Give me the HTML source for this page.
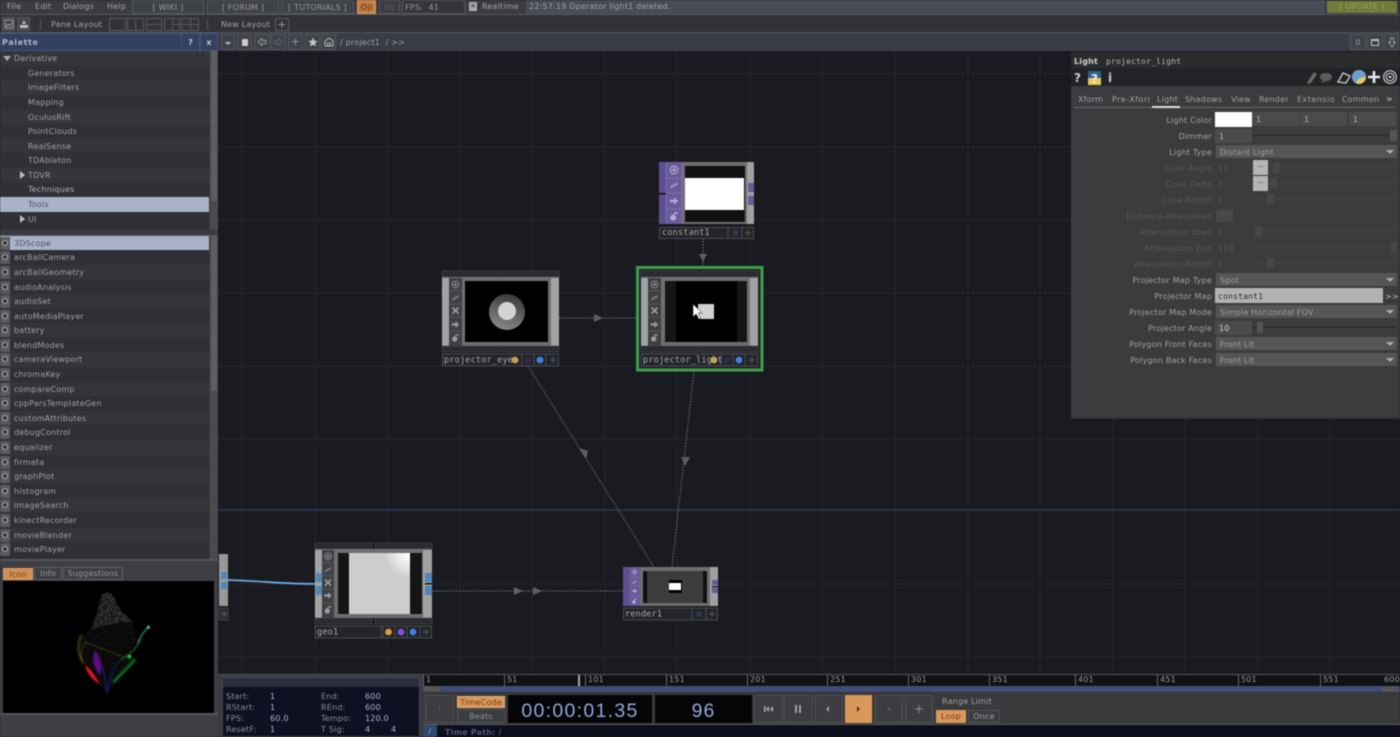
<!DOCTYPE html>
<html><head><meta charset="utf-8"><title>TouchDesigner</title>
<style>
html,body{margin:0;padding:0;background:#191b20;width:1400px;height:737px;overflow:hidden}
#r{position:absolute;left:0;top:0;width:1400px;height:737px;overflow:hidden;filter:blur(.5px);font-family:"DejaVu Sans","Liberation Sans",sans-serif;font-size:8px;letter-spacing:.2px;color:#a2a2a2}
#r div{position:absolute;box-sizing:border-box}
.t{white-space:nowrap;line-height:12px;height:12px}
.b{border:1px solid #55585e;text-align:center;line-height:13px;color:#9a9a9a}
.m{font-family:"DejaVu Sans Mono","Liberation Mono",monospace}
.l{left:1071px;width:141px;text-align:right;white-space:nowrap;line-height:12px;height:12px;color:#a2a2a2;margin-top:1px}
.d{color:#575859}
.t.d{margin-top:1px}
.f{background:#4b4b4c;height:14px;line-height:14px;padding:1px 0 0 4px;color:#b0b0b0}
.s{background:#565657;left:1216px;width:181px;height:13px;line-height:13px;padding:1px 0 0 4px;color:#9f9f9f}
.s:after{content:"";position:absolute;right:3px;top:5px;border:4px solid transparent;border-top:4px solid #aaa;border-bottom:0}
.ln{height:1px;background:#252526}
.ld{height:1px;background:#444546}
.h{width:7px;height:11px;background:#555}
.hd{width:7px;height:11px;background:#464748}
.tr{left:0;width:209px;height:15px;line-height:15px;white-space:nowrap;color:#9ea1a5;padding-left:28px}
.li{left:0;width:209px;height:15px;line-height:15px;white-space:nowrap;color:#9ea1a5;padding-left:14px}
.li:before{content:"";position:absolute;left:0;top:1px;width:10px;height:13px;background:#5a5b5e}
.li:after{content:"";position:absolute;left:2px;top:4px;width:6px;height:6px;box-sizing:border-box;border:1.4px solid #b0b0b0;border-radius:50%;background:#333}
.tt{color:#8f95a0;text-align:center;line-height:11px}
.rl{top:674px;height:12px;line-height:12px;color:#9a9a9a;border-left:1px solid #666;padding-left:2px;white-space:nowrap}
.i{color:#8c8f98;line-height:12px;height:12px;white-space:nowrap;margin-top:1px}
.v{color:#a9b4d8;line-height:12px;height:12px;white-space:nowrap;margin-top:1px}
.c{background:#3c3d41;border:1px solid #4e5055;text-align:center;color:#8f8f8f}
</style></head><body><div id="r">

<!-- top bar -->
<div style="left:0;top:0;width:1400px;height:15px;background:#3a3c41;border-bottom:1px solid #55575c"></div>
<div class="t" style="left:7px;top:1px">File</div>
<div class="t" style="left:35px;top:1px">Edit</div>
<div class="t" style="left:63px;top:1px">Dialogs</div>
<div class="t" style="left:107px;top:1px">Help</div>
<div class="b" style="left:132px;top:0;width:72px;height:14px;background:#3f4247">[ WIKI ]</div>
<div class="b" style="left:207px;top:0;width:72px;height:14px;background:#3f4247">[ FORUM ]</div>
<div class="b" style="left:281px;top:0;width:73px;height:14px;background:#3f4247">[ TUTORIALS ]</div>
<div class="b" style="left:357px;top:0;width:19px;height:14px;background:#c47c42;color:#3a2412;border-color:#d59a68">O|I</div>
<div class="b" style="left:379px;top:0;width:21px;height:14px;color:#5d5f63">60</div>
<div class="b" style="left:402px;top:0;width:63px;height:14px;background:#33353a;text-align:left;padding-left:2px">FPS: &nbsp;41</div>
<div style="left:469px;top:2px;width:8px;height:9px;background:#aaa;color:#222;font-size:7px;line-height:9px;text-align:center;letter-spacing:0">×</div>
<div class="t" style="left:482px;top:1px">Realtime</div>
<div style="left:526px;top:0;width:799px;height:14px;background:#484c56"></div>
<div class="t" style="left:529px;top:1px;color:#a0a3aa">22:57:19 Operator light1 deleted.</div>
<div style="left:1327px;top:1px;width:70px;height:12px;background:#6f7c3c;color:#94a05a;text-align:center;line-height:12px">[ UPDATE ]</div>

<!-- row 2 -->
<div style="left:0;top:15px;width:1400px;height:18px;background:#323337;border-bottom:1px solid #56585c"></div>
<div class="b" style="left:2px;top:17px;width:13px;height:14px;background:#44464b"><svg style="position:absolute;left:1px;top:1px" width="10" height="10"><rect x="1" y="1" width="8" height="8" fill="none" stroke="#999"/><path d="M2 8 L4 5 6 7 8 4" fill="none" stroke="#999"/></svg></div>
<div class="b" style="left:17px;top:17px;width:13px;height:14px;background:#44464b"><svg style="position:absolute;left:1px;top:1px" width="10" height="10"><path d="M3 5 L5 1 7 5Z M1 6 H9 V9 H1Z" fill="#bbb"/></svg></div>
<div style="left:40px;top:19px;width:1px;height:11px;background:#5a5a5a"></div>
<div class="t" style="left:51px;top:19px">Pane Layout</div>
<div class="b" style="left:109px;top:18px;width:17px;height:13px"></div>
<div class="b" style="left:127px;top:18px;width:17px;height:13px"><div style="left:7px;top:0;width:1px;height:11px;background:#55585e"></div></div>
<div class="b" style="left:146px;top:18px;width:16px;height:13px"><div style="left:0;top:5px;width:14px;height:1px;background:#55585e"></div></div>
<div class="b" style="left:164px;top:18px;width:16px;height:13px"><div style="left:7px;top:0;width:1px;height:11px;background:#55585e"></div><div style="left:7px;top:5px;width:8px;height:1px;background:#55585e"></div></div>
<div class="b" style="left:181px;top:18px;width:18px;height:13px"><div style="left:8px;top:0;width:1px;height:11px;background:#55585e"></div><div style="left:0;top:5px;width:16px;height:1px;background:#55585e"></div></div>
<div style="left:207px;top:19px;width:1px;height:11px;background:#5a5a5a"></div>
<div class="t" style="left:221px;top:19px">New Layout</div>
<div class="b" style="left:275px;top:18px;width:14px;height:13px;font-size:11px;line-height:11px">+</div>

<!-- row 3 -->
<div style="left:218px;top:33px;width:1182px;height:18px;background:#3a3d43"></div>
<div style="left:0;top:33px;width:218px;height:18px;background:#33405f;border:1px solid #47557c"></div>
<div class="t" style="left:2px;top:37px;font-weight:bold;color:#b0b6c4;letter-spacing:.6px">Palette</div>
<div class="b" style="left:181px;top:33px;width:19px;height:18px;line-height:18px;font-weight:bold;border-color:#47557c;color:#c0c4d0">?</div>
<div class="b" style="left:200px;top:33px;width:18px;height:18px;line-height:18px;font-weight:bold;border-color:#47557c;color:#c0c4d0">x</div>
<div class="b" style="left:221px;top:34px;width:14px;height:16px;background:#3f4247"><div style="left:3px;top:7px;border:3px solid transparent;border-top:3px solid #bbb;border-bottom:0"></div></div>
<div class="b" style="left:237px;top:34px;width:15px;height:16px;background:#3f4247"><div style="left:4px;top:4px;width:6px;height:7px;background:#ccc"></div></div>
<div class="b" style="left:254px;top:34px;width:16px;height:16px;background:#3f4247"><svg style="position:absolute;left:2px;top:2px" width="10" height="10"><path d="M1 5 L5 1.500 V3.500 H9 V6.500 H5 V8.500Z" fill="none" stroke="#999" stroke-width=".9"/></svg></div>
<div class="b" style="left:271px;top:34px;width:15px;height:16px;background:#3f4247"><svg style="position:absolute;left:2px;top:2px" width="10" height="10"><path d="M9 5 L5 1.500 V3.500 H1 V6.500 H5 V8.500Z" fill="none" stroke="#606266" stroke-width=".9"/></svg></div>
<div class="b" style="left:288px;top:34px;width:15px;height:16px;background:#3f4247;font-size:11px;line-height:14px">+</div>
<div class="b" style="left:305px;top:34px;width:15px;height:16px;background:#3f4247"><svg style="position:absolute;left:2px;top:2px" width="10" height="10"><path d="M5 0.500 L6.300 3.700 9.700 4 7.100 6.200 8 9.500 5 7.700 2 9.500 2.900 6.200 .3 4 3.700 3.700Z" fill="#c4c4c4"/></svg></div>
<div class="b" style="left:321px;top:34px;width:15px;height:16px;background:#3f4247"><svg style="position:absolute;left:2px;top:2px" width="10" height="10"><path d="M5 1 L9 4 V9 H1 V4Z M3.500 6 H6.500 V8.500 H3.500Z" fill="none" stroke="#aaa" stroke-width="1.1"/></svg></div>
<div class="t" style="left:340px;top:37px;color:#9fa1a6">/ project1 &nbsp;/ &gt;&gt;</div>
<div class="b" style="left:1350px;top:34px;width:16px;height:16px;background:#3f4247;line-height:15px">0</div>
<div class="b" style="left:1367px;top:34px;width:16px;height:16px;background:#3f4247"><div style="left:3px;top:4px;width:8px;height:7px;border:1px solid #bbb;border-top-width:2px"></div></div>
<div class="b" style="left:1384px;top:34px;width:15px;height:16px;background:#3f4247"><svg style="position:absolute;left:2px;top:2px" width="10" height="11"><path d="M3.500 1 H6.500 V5.500 H8.500 L5 10 1.500 5.500 H3.500Z" fill="none" stroke="#999"/></svg></div>

<!-- palette tree -->
<div style="left:0;top:51px;width:218px;height:185px;background:#2f3136"></div>
<div class="tr" style="top:51px;padding-left:14px;background:#34363b">Derivative</div>
<div style="left:3px;top:56px;border:4px solid transparent;border-top:5px solid #aaa;border-bottom:0"></div>
<div class="tr" style="top:66px;background:#2f3136">Generators</div>
<div class="tr" style="top:80px;background:#34363b">ImageFilters</div>
<div class="tr" style="top:95px;background:#2f3136">Mapping</div>
<div class="tr" style="top:110px;background:#34363b">OculusRift</div>
<div class="tr" style="top:124px;background:#2f3136">PointClouds</div>
<div class="tr" style="top:139px;background:#34363b">RealSense</div>
<div class="tr" style="top:153px;background:#2f3136">TDAbleton</div>
<div class="tr" style="top:168px;background:#34363b">TDVR</div>
<div style="left:20px;top:171px;border:4px solid transparent;border-left:5px solid #c0c0c0;border-right:0"></div>
<div class="tr" style="top:182px;background:#2f3136;color:#aeb1b5">Techniques</div>
<div class="tr" style="top:197px;height:15px;background:#a9b2c8;color:#4c5160">Tools</div>
<div class="tr" style="top:212px;background:#2f3136">UI</div>
<div style="left:20px;top:215px;border:4px solid transparent;border-left:5px solid #c0c0c0;border-right:0"></div>
<div style="left:209px;top:51px;width:9px;height:183px;background:#4a4b4e;border-left:1px solid #37383b"></div>
<div style="left:211px;top:51px;width:6px;height:150px;background:#5d5e61"></div>
<div style="left:0;top:230px;width:218px;height:6px;background:#3a3b3e;border-bottom:1px solid #58595c"></div>

<!-- palette list -->
<div style="left:0;top:236px;width:218px;height:324px;background:#2d2f34"></div>
<div class="li" style="top:236px;background:#a9b2c8;color:#4c5160">3DScope</div>
<div class="li" style="top:250px;background:#2e3035">arcBallCamera</div>
<div class="li" style="top:265px;background:#33353a">arcBallGeometry</div>
<div class="li" style="top:280px;background:#2e3035">audioAnalysis</div>
<div class="li" style="top:294px;background:#33353a">audioSet</div>
<div class="li" style="top:309px;background:#2e3035">autoMediaPlayer</div>
<div class="li" style="top:323px;background:#33353a">battery</div>
<div class="li" style="top:338px;background:#2e3035">blendModes</div>
<div class="li" style="top:352px;background:#33353a">cameraViewport</div>
<div class="li" style="top:367px;background:#2e3035">chromaKey</div>
<div class="li" style="top:382px;background:#33353a">compareComp</div>
<div class="li" style="top:396px;background:#2e3035">cppParsTemplateGen</div>
<div class="li" style="top:411px;background:#33353a">customAttributes</div>
<div class="li" style="top:425px;background:#2e3035">debugControl</div>
<div class="li" style="top:440px;background:#33353a">equalizer</div>
<div class="li" style="top:455px;background:#2e3035">firmata</div>
<div class="li" style="top:469px;background:#33353a">graphPlot</div>
<div class="li" style="top:484px;background:#2e3035">histogram</div>
<div class="li" style="top:498px;background:#33353a">imageSearch</div>
<div class="li" style="top:513px;background:#2e3035">kinectRecorder</div>
<div class="li" style="top:528px;background:#33353a">movieBlender</div>
<div class="li" style="top:542px;background:#2e3035">moviePlayer</div>
<div style="left:209px;top:236px;width:9px;height:324px;background:#4a4b4e;border-left:1px solid #37383b"></div>
<div style="left:211px;top:236px;width:6px;height:155px;background:#5d5e61"></div>

<!-- icon panel -->
<div style="left:0;top:559px;width:218px;height:178px;background:#3e3f42;border-top:2px solid #55565a"></div>
<div class="tt" style="left:3px;top:568px;width:30px;height:12px;background:#d08f55;color:#8a3c1a;border:1px solid #d9a070">Icon</div>
<div class="tt" style="left:34px;top:567px;width:28px;height:13px;border:1px solid #5e6066">Info</div>
<div class="tt" style="left:63px;top:567px;width:60px;height:13px;border:1px solid #5e6066">Suggestions</div>
<div style="left:3px;top:581px;width:211px;height:132px;background:#000"></div>
<div style="left:0;top:713px;width:218px;height:2px;background:#55565a"></div>
<svg style="position:absolute;left:0;top:0" width="218" height="737">
<defs>
<filter id="bl" x="-30%" y="-30%" width="160%" height="160%"><feGaussianBlur stdDeviation="3.500"/></filter>
<filter id="b2" x="-30%" y="-30%" width="160%" height="160%"><feGaussianBlur stdDeviation="1.500"/></filter>
<filter id="sp" x="-10%" y="-10%" width="120%" height="120%"><feTurbulence type="fractalNoise" baseFrequency=".28" numOctaves="2" seed="4"/><feColorMatrix values="0 0 0 0 .5 0 0 0 0 .5 0 0 0 0 .5 0 0 0 4 -1.700"/><feComposite in2="SourceGraphic" operator="in"/><feGaussianBlur stdDeviation="1.200"/></filter>
</defs>
<g transform="translate(50 585) scale(.3333)">
<path d="M150 42 C158 15 190 15 198 50 C208 80 235 95 248 112 C200 108 150 125 120 135 C135 105 145 80 150 42Z" fill="#fff" filter="url(#sp)" opacity=".55"/>
<path d="M120 135 C92 150 78 195 95 228 C115 262 150 300 172 325 C200 280 240 240 265 180 C260 150 250 125 245 112 C200 108 150 125 120 135Z" fill="#fff" filter="url(#sp)" opacity=".16"/>
<path d="M95 150 C82 175 80 200 100 235" fill="none" stroke="#5a5a20" stroke-width="6" filter="url(#bl)" opacity=".8"/>
<path d="M108 172 L226 218 M108 172 C96 190 88 205 96 225" fill="none" stroke="#a89a2c" stroke-width="2" stroke-dasharray="3 2" filter="url(#b2)" opacity=".9"/>
<path d="M104 240 C125 252 138 278 150 298 C125 285 110 262 104 240Z" fill="#d81222" filter="url(#b2)"/>
<path d="M135 195 C148 215 165 240 150 272 C135 250 122 230 135 195Z" fill="#5c0c86" filter="url(#bl)"/>
<path d="M208 228 C190 250 176 280 172 325 M160 245 C163 280 168 300 172 325" fill="none" stroke="#1c2aa0" stroke-width="3" filter="url(#b2)" opacity=".8"/>
<path d="M255 222 C235 248 212 268 190 292" fill="none" stroke="#148a26" stroke-width="7" filter="url(#bl)"/>
<path d="M275 158 C262 190 240 208 210 226" fill="none" stroke="#1c9c32" stroke-width="2.500" filter="url(#b2)" opacity=".8"/>
<circle cx="238" cy="215" r="6" fill="#22c03a" filter="url(#b2)"/>
<path d="M298 124 C288 132 276 146 262 176" fill="none" stroke="#248a7c" stroke-width="4" filter="url(#b2)"/>
<circle cx="295" cy="127" r="5" fill="#36b8a4" filter="url(#b2)"/>
</g></svg>

<!-- network grid -->
<svg style="position:absolute;left:218px;top:51px" width="1182" height="623" viewBox="218 51 1182 623">
<defs>
<symbol id="ta" viewBox="0 0 12 12"><circle cx="6" cy="6" r="4.500" fill="none" stroke="currentColor" stroke-width="1.400"/><circle cx="6" cy="6" r="2" fill="currentColor"/></symbol>
<symbol id="pe" viewBox="0 0 12 12"><path d="M1 11 L3 6 6 7 5 4 8 5 11 1 9 7 6 6 7 9 4 8Z" fill="currentColor"/></symbol>
<symbol id="xx" viewBox="0 0 12 12"><path d="M2 2 L10 10 M10 2 L2 10" stroke="currentColor" stroke-width="2.400" fill="none"/></symbol>
<symbol id="ar" viewBox="0 0 12 12"><path d="M1 4.500 H6 V1.500 L11 6 6 10.500 V7.500 H1Z" fill="currentColor"/></symbol>
<symbol id="lo" viewBox="0 0 12 12"><circle cx="5" cy="8" r="3.600" fill="currentColor"/><path d="M6 5 C6 1 10 1 10 4" fill="none" stroke="currentColor" stroke-width="1.500"/></symbol>
<pattern id="dp" width="2" height="2" patternUnits="userSpaceOnUse"><rect width="2" height="2" fill="#2f2f2f"/><rect width="1" height="1" fill="#4a4a4a"/><rect x="1" y="1" width="1" height="1" fill="#4a4a4a"/></pattern>
</defs>
<rect x="218" y="51" width="1182" height="623" fill="#191b20"/>
<g stroke="#24262c" stroke-width="1">
<path d="M242 51V674M315 51V674M387 51V674M460 51V674M532 51V674M605 51V674M677 51V674M750 51V674M822 51V674M895 51V674M968 51V674M1040 51V674M1113 51V674M1185 51V674M1258 51V674M1330 51V674"/>
<path d="M218 74H1400M218 147H1400M218 220H1400M218 293H1400M218 366H1400M218 439H1400M218 584H1400M218 657H1400"/>
</g>
<path d="M218 510H1400" stroke="#373a5c" stroke-width="1.200"/>

<!-- links -->
<g fill="none" stroke="#66696e" stroke-width="1.200" stroke-dasharray="1.500 1.500">
<path d="M703 238 V266"/>
<path d="M553 318 H641"/>
<path d="M528 366 L654 567"/>
<path d="M694 371 L672 567"/>
<path d="M432 591 H623"/>
</g>
<g fill="#5c5f64">
<path d="M699 254 H707 L703 262Z"/>
<path d="M594 314 L603 318 594 322Z"/>
<path d="M579 448 L588 451 586 459Z"/>
<path d="M681 457 H690 L685 466Z"/>
<path d="M514 587 L523 591 514 595Z"/>
<path d="M533 587 L542 591 533 595Z"/>
</g>
<path d="M226 580 C265 581 280 584 318 584" fill="none" stroke="#6fa8dc" stroke-width="1.800"/>

<!-- clipped node -->
<rect x="219" y="554" width="9" height="52" fill="#999"/>
<rect x="221" y="572" width="6" height="7" fill="#4f88b8"/><rect x="221" y="582" width="6" height="7" fill="#4f88b8"/>
<rect x="219" y="608" width="9" height="12" fill="#2c2d31" stroke="#4a4b4e" stroke-width=".7"/>
<text x="220" y="617" font-size="10" fill="#66686c">+</text>

<!-- constant1 -->
<g>
<rect x="659" y="162" width="95" height="62" fill="#6f6f6f"/>
<rect x="659" y="162" width="7" height="62" fill="#5d5090"/>
<rect x="666" y="162" width="16" height="62" fill="#6a5a9a"/>
<path d="M666 178H682M666 193H682M666 209H682M666 162V224M682 162V224" stroke="#8678b8" stroke-width=".7"/>
<rect x="659" y="193" width="7" height="1.500" fill="#111"/>
<use href="#ta" x="669" y="165" width="10" height="10" color="#b4aacc"/>
<use href="#pe" x="669" y="180" width="10" height="10" color="#b4aacc"/>
<use href="#ar" x="669" y="196" width="10" height="10" color="#b4aacc"/>
<use href="#lo" x="669" y="211" width="10" height="10" color="#b4aacc"/>
<rect x="685" y="166" width="60" height="56" fill="#111"/>
<rect x="685" y="178" width="59" height="32" fill="#fff"/>
<rect x="747" y="162" width="7" height="62" fill="#a0a0a0"/>
<rect x="748" y="183" width="6" height="9" fill="#6a5a9a"/><rect x="748" y="196" width="6" height="9" fill="#6a5a9a"/>
<rect x="659.500" y="227.500" width="94" height="11" fill="#24252a" stroke="#55565a" stroke-width=".8"/>
<path d="M728 227V238M742 227V238" stroke="#55565a" stroke-width=".8"/>
<circle cx="735.500" cy="233" r="3" fill="#2b3a55"/><path d="M748 230V236M745 233H751" stroke="#555" stroke-width="1.200"/>
<text class="m" x="662" y="235" font-size="8.500" fill="#a8a8a8">constant1</text>
</g>

<!-- projector_eyes -->
<g>
<rect x="442" y="271" width="58" height="6" fill="#2b2c30" stroke="#48494d" stroke-width=".6"/><rect x="502" y="271" width="57" height="6" fill="#2b2c30" stroke="#48494d" stroke-width=".6"/>
<rect x="442" y="277" width="117" height="69" fill="#6f6f6f"/>
<rect x="442" y="278" width="7" height="68" fill="#a2a2a2"/>
<rect x="449" y="278" width="13" height="68" fill="#3f4044"/>
<path d="M449 291H462M449 304H462M449 317H462M449 331H462" stroke="#5a5b5f" stroke-width=".7"/>
<use href="#ta" x="451" y="280" width="9" height="9" color="#8a8a8a"/><use href="#pe" x="451" y="293" width="9" height="9" color="#8a8a8a"/><use href="#xx" x="451" y="306" width="9" height="9" color="#999"/><use href="#ar" x="451" y="320" width="9" height="9" color="#999"/><use href="#lo" x="451" y="333" width="9" height="9" color="#999"/>
<rect x="465" y="281" width="83" height="61" fill="#000"/>
<defs><linearGradient id="g1" x1=".6" y1="0" x2=".3" y2="1"><stop offset="0" stop-color="#3a3a3a"/><stop offset="1" stop-color="#8a8a8a"/></linearGradient></defs>
<circle cx="507" cy="312" r="18" fill="url(#g1)"/><circle cx="507" cy="311" r="9" fill="#d2d2d2"/>
<rect x="551" y="278" width="8" height="68" fill="#a2a2a2"/>
<rect x="442" y="346" width="58" height="6" fill="#2b2c30" stroke="#48494d" stroke-width=".6"/><rect x="502" y="346" width="57" height="6" fill="#2b2c30" stroke="#48494d" stroke-width=".6"/>
<rect x="442.500" y="354" width="116" height="12" fill="#24252a" stroke="#55565a" stroke-width=".8"/>
<path d="M522 354V366M534 354V366M546 354V366" stroke="#55565a" stroke-width=".7"/>
<circle cx="515" cy="360" r="3.400" fill="#d99a3c"/><circle cx="528" cy="360" r="3.200" fill="#2e2c50"/><circle cx="540" cy="360" r="3.400" fill="#3f7fe0"/><path d="M553 357V363M550 360H556" stroke="#555" stroke-width="1.200"/>
<text class="m" x="444" y="362.500" font-size="8.500" fill="#a8a8a8">projector_eyes</text>
</g>

<!-- projector_light -->
<g>
<rect x="637.500" y="267.500" width="124.500" height="102.500" fill="#22242a" stroke="#3f9e4c" stroke-width="3"/>
<rect x="641" y="271" width="57" height="6" fill="#2b2c30" stroke="#48494d" stroke-width=".6"/><rect x="701" y="271" width="57" height="6" fill="#2b2c30" stroke="#48494d" stroke-width=".6"/>
<rect x="641" y="277" width="117" height="69" fill="#6f6f6f"/>
<rect x="641" y="278" width="7" height="68" fill="#a2a2a2"/>
<rect x="648" y="278" width="13" height="68" fill="#3f4044"/>
<path d="M648 291H661M648 304H661M648 317H661M648 331H661" stroke="#5a5b5f" stroke-width=".7"/>
<use href="#ta" x="650" y="280" width="9" height="9" color="#8a8a8a"/><use href="#pe" x="650" y="293" width="9" height="9" color="#8a8a8a"/><use href="#xx" x="650" y="306" width="9" height="9" color="#999"/><use href="#ar" x="650" y="320" width="9" height="9" color="#999"/><use href="#lo" x="650" y="333" width="9" height="9" color="#999"/>
<rect x="665" y="281" width="82" height="61" fill="#151515"/>
<rect x="676" y="281" width="61" height="61" fill="#000"/>
<rect x="698" y="304" width="16" height="15" fill="#d0d0d0"/>
<rect x="750" y="278" width="8" height="68" fill="#a2a2a2"/>
<path d="M693 304 V317 L696 314 L699 319 L701 318 L698 313 L702 313Z" fill="#fff" stroke="#111" stroke-width=".5"/>
<rect x="641" y="346" width="57" height="6" fill="#2b2c30" stroke="#48494d" stroke-width=".6"/><rect x="701" y="346" width="57" height="6" fill="#2b2c30" stroke="#48494d" stroke-width=".6"/>
<rect x="641.500" y="354" width="116" height="12" fill="#24252a" stroke="#55565a" stroke-width=".8"/>
<path d="M721 354V366M733 354V366M745 354V366" stroke="#55565a" stroke-width=".7"/>
<circle cx="714" cy="360" r="3.400" fill="#d99a3c"/><circle cx="727" cy="360" r="3.200" fill="#2e2c50"/><circle cx="739" cy="360" r="3.400" fill="#3f7fe0"/><path d="M752 357V363M749 360H755" stroke="#555" stroke-width="1.200"/>
<text class="m" x="643" y="362.500" font-size="8.500" fill="#a8a8a8">projector_light</text>
</g>

<!-- geo1 -->
<g>
<rect x="315" y="543" width="57" height="6" fill="#2b2c30" stroke="#48494d" stroke-width=".6"/><rect x="375" y="543" width="57" height="6" fill="#2b2c30" stroke="#48494d" stroke-width=".6"/>
<rect x="315" y="549" width="117" height="69" fill="#6f6f6f"/>
<rect x="315" y="550" width="7" height="68" fill="#a2a2a2"/>
<rect x="322" y="550" width="12" height="68" fill="#3f4044"/>
<path d="M322 563H334M322 576H334M322 589H334M322 603H334" stroke="#5a5b5f" stroke-width=".7"/>
<use href="#ta" x="323.500" y="552" width="9" height="9" color="#8a8a8a"/><use href="#pe" x="323.500" y="565" width="9" height="9" color="#8a8a8a"/><use href="#xx" x="323.500" y="578" width="9" height="9" color="#999"/><use href="#ar" x="323.500" y="591" width="9" height="9" color="#999"/><use href="#lo" x="323.500" y="605" width="9" height="9" color="#999"/>
<rect x="338" y="553" width="84" height="61" fill="#151515"/>
<defs><radialGradient id="g2" cx="1" cy="0" r=".42"><stop offset="0" stop-color="#fff"/><stop offset=".25" stop-color="#f8f8f8"/><stop offset="1" stop-color="#cdcdcd"/></radialGradient></defs>
<rect x="349" y="553" width="61" height="61" fill="url(#g2)"/>
<rect x="423" y="550" width="9" height="68" fill="#a2a2a2"/>
<rect x="316" y="573" width="6" height="9" fill="#4f88b8"/><rect x="316" y="586" width="6" height="9" fill="#4f88b8"/>
<rect x="425" y="573" width="7" height="9" fill="#4f88b8"/><rect x="425" y="586" width="7" height="9" fill="#4f88b8"/>
<rect x="425" y="583" width="7" height="1.500" fill="#111"/>
<rect x="315" y="618" width="57" height="6" fill="#2b2c30" stroke="#48494d" stroke-width=".6"/><rect x="375" y="618" width="57" height="6" fill="#2b2c30" stroke="#48494d" stroke-width=".6"/>
<rect x="315.500" y="626" width="116" height="12" fill="#24252a" stroke="#55565a" stroke-width=".8"/>
<path d="M381 626V638M383 626V638M395 626V638M407 626V638M420 626V638" stroke="#55565a" stroke-width=".7"/>
<circle cx="388.500" cy="632" r="3.400" fill="#d99a3c"/><circle cx="401" cy="632" r="3.400" fill="#7a55d8"/><circle cx="413" cy="632" r="3.400" fill="#3f7fe0"/><path d="M426 629V635M423 632H429" stroke="#555" stroke-width="1.200"/>
<text class="m" x="317" y="634.500" font-size="8.500" fill="#a8a8a8">geo1</text>
</g>

<!-- render1 -->
<g>
<rect x="623" y="567" width="95" height="39" fill="#6f6f6f"/>
<rect x="623" y="567" width="6" height="39" fill="#5d5090"/>
<rect x="629" y="567" width="11" height="39" fill="#6a5a9a"/>
<path d="M629 577H640M629 586H640M629 596H640" stroke="#8678b8" stroke-width=".6"/>
<use href="#ta" x="631.500" y="569" width="6" height="6" color="#b4aacc"/><use href="#pe" x="631.500" y="579" width="6" height="6" color="#b4aacc"/><use href="#ar" x="631.500" y="588" width="6" height="6" color="#b4aacc"/><use href="#lo" x="631.500" y="598" width="6" height="6" color="#b4aacc"/>
<rect x="643" y="571" width="64" height="32" fill="url(#dp)"/>
<rect x="643" y="571" width="4" height="32" fill="#111"/><rect x="703" y="571" width="4" height="32" fill="#111"/>
<rect x="669" y="580" width="13" height="13" fill="#000"/><rect x="669" y="583" width="12" height="7" fill="#fff"/>
<rect x="710" y="567" width="8" height="39" fill="#a0a0a0"/>
<rect x="712" y="580" width="6" height="5" fill="#6a5a9a"/><rect x="712" y="588" width="6" height="5" fill="#6a5a9a"/><rect x="712" y="586" width="6" height="1.300" fill="#111"/>
<rect x="623.500" y="608" width="94" height="12" fill="#24252a" stroke="#55565a" stroke-width=".8"/>
<path d="M692 608V620M706 608V620" stroke="#55565a" stroke-width=".8"/>
<circle cx="699" cy="614" r="3" fill="#2b3a55"/><path d="M712 611V617M709 614H715" stroke="#555" stroke-width="1.200"/>
<text class="m" x="625" y="616.500" font-size="8.500" fill="#a8a8a8">render1</text>
</g>
</svg>

<!-- parameter panel -->
<div style="left:1071px;top:52px;width:329px;height:367px;background:#3b3c3d;border-bottom:1px solid #2a2b2c"></div>
<div style="left:1071px;top:52px;width:329px;height:16px;background:#2a2b2d"></div>
<div style="left:1071px;top:68px;width:329px;height:18px;background:#222326"></div>
<div class="t" style="left:1074px;top:56px;color:#ccc;font-weight:bold">Light</div>
<div class="t m" style="left:1106px;top:56px;color:#b8b8b8">projector_light</div>
<svg style="position:absolute;left:1071px;top:68px" width="329" height="18">
<text x="3" y="14" font-size="12" font-weight="bold" fill="#ccc" font-family="DejaVu Sans">?</text>
<rect x="17" y="3" width="13" height="7" fill="#2f5f8f"/><rect x="17" y="10" width="13" height="7" fill="#e8c860"/>
<text x="20" y="15" font-size="12" font-weight="bold" fill="#eee" font-family="DejaVu Sans">?</text>
<text x="37" y="14" font-size="12" font-weight="bold" fill="#ccc" font-family="DejaVu Sans">i</text>
<path d="M237 13 L243 4 246 6 240 15 236 16Z" fill="#6a6a6a"/>
<ellipse cx="255" cy="9" rx="6" ry="4" fill="#5c5c5c"/><path d="M252 12 L250 15 256 13Z" fill="#5c5c5c"/>
<path d="M267 14 L272 5 279 8 275 15Z" fill="none" stroke="#ccc" stroke-width="1.300"/>
<circle cx="288" cy="9" r="7" fill="#e8c860"/><path d="M281 9 A7 7 0 0 1 295 9 C290 9 286 11 285 15 A7 7 0 0 1 281 9Z" fill="#6aa0d0"/>
<path d="M303 3V15M297 9H309" stroke="#e8e8e8" stroke-width="2.600"/>
<circle cx="319" cy="9" r="6.300" fill="none" stroke="#ccc" stroke-width="1.200"/><circle cx="319" cy="9" r="3.800" fill="none" stroke="#ccc" stroke-width="1.200"/><circle cx="319" cy="9" r="1.400" fill="#ccc"/>
</svg>
<div class="t" style="left:1078px;top:94px">Xform</div>
<div class="t" style="left:1112px;top:94px;width:38px;overflow:hidden;letter-spacing:.5px">Pre-Xform</div>
<div class="t" style="left:1157px;top:94px">Light</div>
<div class="t" style="left:1185px;top:94px">Shadows</div>
<div class="t" style="left:1231px;top:94px">View</div>
<div class="t" style="left:1259px;top:94px">Render</div>
<div class="t" style="left:1297px;top:94px;width:38px;overflow:hidden;letter-spacing:.5px">Extension</div>
<div class="t" style="left:1342px;top:94px">Common</div>
<div class="t" style="left:1386px;top:94px;font-weight:bold;font-size:10px">»</div>
<div style="left:1074px;top:107px;width:321px;height:1px;background:#6a6b6c"></div>
<div style="left:1152px;top:106px;width:28px;height:2px;background:#ddd"></div>

<div class="l" style="top:114px">Light Color</div>
<div style="left:1215px;top:112px;width:37px;height:15px;background:#fff"></div>
<div class="f" style="left:1252px;top:112px;width:47px">1</div>
<div class="f" style="left:1300px;top:112px;width:47px">1</div>
<div class="f" style="left:1349px;top:112px;width:47px">1</div>

<div class="l" style="top:130px">Dimmer</div>
<div class="f" style="left:1215px;top:129px;width:37px">1</div>
<div class="ln" style="left:1253px;top:135px;width:140px"></div><div class="h" style="left:1390px;top:130px"></div>

<div class="l" style="top:146px">Light Type</div>
<div class="s" style="top:145px">Distant Light</div>

<div class="l d" style="top:162px">Cone Angle</div>
<div class="t d" style="left:1218px;top:162px">10</div>
<div style="left:1253px;top:160px;width:15px;height:15px;background:#b5b5b5;color:#666;text-align:center;line-height:14px">−</div>
<div class="ld" style="left:1268px;top:167px;width:129px"></div><div class="hd" style="left:1273px;top:162px"></div>

<div class="l d" style="top:178px">Cone Delta</div>
<div class="t d" style="left:1218px;top:178px">3</div>
<div style="left:1253px;top:176px;width:15px;height:15px;background:#b5b5b5;color:#666;text-align:center;line-height:14px">−</div>
<div class="ld" style="left:1268px;top:183px;width:129px"></div><div class="hd" style="left:1270px;top:178px"></div>

<div class="l d" style="top:194px">Cone Rolloff</div>
<div class="t d" style="left:1218px;top:194px">1</div>
<div class="ld" style="left:1253px;top:199px;width:144px"></div><div class="hd" style="left:1267px;top:194px"></div>

<div class="l d" style="top:210px">Distance-Attenuated</div>
<div class="d" style="left:1216px;top:209px;width:17px;height:13px;background:#464748;text-align:center;line-height:13px;font-size:7px">Off</div>

<div class="l d" style="top:226px">Attenuation Start</div>
<div class="t d" style="left:1218px;top:226px">1</div>
<div class="ld" style="left:1253px;top:231px;width:144px"></div><div class="hd" style="left:1255px;top:226px"></div>

<div class="l d" style="top:242px">Attenuation End</div>
<div class="t d" style="left:1218px;top:242px">100</div>
<div class="ld" style="left:1253px;top:247px;width:144px"></div><div class="hd" style="left:1391px;top:242px;width:6px"></div>

<div class="l d" style="top:258px">Attenuation Rolloff</div>
<div class="t d" style="left:1218px;top:258px">1</div>
<div class="ld" style="left:1253px;top:263px;width:144px"></div><div class="hd" style="left:1267px;top:258px"></div>

<div class="l" style="top:274px">Projector Map Type</div>
<div class="s" style="top:273px">Spot</div>
<div class="l" style="top:290px">Projector Map</div>
<div class="m" style="left:1215px;top:288px;width:168px;height:15px;background:#b2b2b2;color:#2a2a2a;line-height:17px;padding-left:3px">constant1</div>
<div class="t" style="left:1385px;top:291px;color:#bbb">&gt;&gt;</div>
<div class="l" style="top:306px">Projector Map Mode</div>
<div class="s" style="top:305px">Simple Horizontal FOV</div>
<div class="l" style="top:322px">Projector Angle</div>
<div class="f" style="left:1215px;top:321px;width:37px;color:#d8d8d8">10</div>
<div class="ln" style="left:1253px;top:327px;width:144px"></div><div class="h" style="left:1257px;top:322px;width:6px"></div>
<div class="l" style="top:338px">Polygon Front Faces</div>
<div class="s" style="top:337px">Front Lit</div>
<div class="l" style="top:354px">Polygon Back Faces</div>
<div class="s" style="top:353px">Front Lit</div>

<!-- bottom -->
<div style="left:218px;top:674px;width:205px;height:63px;background:#3a3b3f;border-top:1px solid #505155"></div>
<div style="left:222px;top:677px;width:198px;height:60px;background:#0f1022;border:1px solid #46474c"></div>
<div style="left:223px;top:678px;width:196px;height:9px;background:#2b2c3c"></div>
<div class="i" style="left:226px;top:690px">Start:</div><div class="v" style="left:270px;top:690px">1</div>
<div class="i" style="left:321px;top:690px">End:</div><div class="v" style="left:365px;top:690px">600</div>
<div class="i" style="left:226px;top:701px">RStart:</div><div class="v" style="left:270px;top:701px">1</div>
<div class="i" style="left:321px;top:701px">REnd:</div><div class="v" style="left:365px;top:701px">600</div>
<div class="i" style="left:226px;top:712px">FPS:</div><div class="v" style="left:270px;top:712px">60.0</div>
<div class="i" style="left:321px;top:712px">Tempo:</div><div class="v" style="left:365px;top:712px">120.0</div>
<div class="i" style="left:226px;top:723px">ResetF:</div><div class="v" style="left:270px;top:723px">1</div>
<div class="i" style="left:321px;top:723px">T Sig:</div><div class="v" style="left:365px;top:723px">4</div><div class="v" style="left:391px;top:723px">4</div>

<div style="left:423px;top:674px;width:977px;height:12px;background:#111113;border-top:1px solid #55565a"></div>
<div class="rl" style="left:423px">1</div>
<div class="rl" style="left:504px">51</div>
<div class="rl" style="left:585px">101</div>
<div class="rl" style="left:666px">151</div>
<div class="rl" style="left:747px">201</div>
<div class="rl" style="left:827px">251</div>
<div class="rl" style="left:908px">301</div>
<div class="rl" style="left:989px">351</div>
<div class="rl" style="left:1075px">401</div>
<div class="rl" style="left:1157px">451</div>
<div class="rl" style="left:1238px">501</div>
<div class="rl" style="left:1320px">551</div>
<div class="rl" style="left:1382px;border:0">600</div>
<div style="left:578px;top:675px;width:2px;height:11px;background:#aaa"></div>
<div style="left:423px;top:686px;width:977px;height:7px;background:#3f4d78;border-bottom:1px solid #333"></div>
<div style="left:424px;top:686px;width:16px;height:6px;background:#55565a"></div>
<div style="left:1382px;top:686px;width:16px;height:6px;background:#55565a"></div>
<div style="left:423px;top:693px;width:977px;height:32px;background:#393a3c;border-bottom:1px solid #5a5b5e"></div>
<div style="left:423px;top:725px;width:977px;height:12px;background:#0d0e1c"></div>

<div class="c" style="left:425px;top:695px;width:29px;height:28px;line-height:26px;color:#5c5d60">I</div>
<div style="left:457px;top:696px;width:48px;height:12px;background:#d8985c;color:#7a3a16;text-align:center;line-height:12px;border:1px solid #e0aa78">TimeCode</div>
<div class="c" style="left:457px;top:709px;width:48px;height:14px;line-height:13px">Beats</div>
<div style="left:508px;top:695px;width:144px;height:28px;background:#050508"></div>
<div style="left:508px;top:695px;width:144px;height:28px;line-height:32px;text-align:center;color:#90a8d8;font-size:19.500px;letter-spacing:1.300px;font-family:'Liberation Sans',sans-serif">00:00:01.35</div>
<div style="left:655px;top:695px;width:97px;height:28px;background:#050508;line-height:32px;text-align:center;color:#90a8d8;font-size:19.500px;letter-spacing:1px;font-family:'Liberation Sans',sans-serif">96</div>
<div class="c" style="left:754px;top:695px;width:29px;height:28px"><svg style="position:absolute;left:8px;top:8px" width="12" height="10"><path d="M1 2 H2.500 V8 H1Z M6 2 V8 L3 5Z M10 2 V8 L7 5Z" fill="#a8a8a8"/></svg></div>
<div class="c" style="left:784px;top:695px;width:29px;height:28px"><div style="left:10px;top:9px;width:2px;height:8px;background:#a0a0a0"></div><div style="left:14px;top:9px;width:2px;height:8px;background:#a0a0a0"></div></div>
<div class="c" style="left:815px;top:695px;width:28px;height:28px"><div style="left:10px;top:10px;border:3px solid transparent;border-right:3px solid #a0a0a0;border-left:0"></div></div>
<div style="left:845px;top:695px;width:27px;height:28px;background:#d8985c"><div style="left:12px;top:11px;border:3px solid transparent;border-left:3px solid #5a2a10;border-right:0"></div></div>
<div class="c" style="left:875px;top:695px;width:28px;height:28px;line-height:26px;font-size:11px">-</div>
<div class="c" style="left:905px;top:695px;width:28px;height:28px;line-height:26px;font-size:12px">+</div>
<div class="t" style="left:942px;top:696px;color:#a0a0a0">Range Limit</div>
<div style="left:936px;top:710px;width:30px;height:13px;background:#d8985c;color:#7a3a16;text-align:center;line-height:13px">Loop</div>
<div class="c" style="left:968px;top:710px;width:32px;height:13px;line-height:12px;color:#a0a0a0">Once</div>
<div style="left:423px;top:725px;width:14px;height:12px;background:#33466e;color:#9db0d8;text-align:center;line-height:13px">/</div>
<div class="t" style="left:445px;top:727px;color:#4f5a78;font-weight:bold">Time Path: /</div>

</div></body></html>
